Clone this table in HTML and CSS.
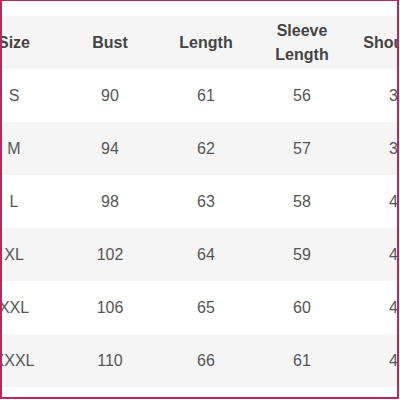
FILE: index.html
```html
<!DOCTYPE html>
<html>
<head>
<meta charset="utf-8">
<link rel="stylesheet" href="styles.css">
</head>
<body>
<div class="frame">
  <table class="sizes">
    <thead>
      <tr><th>Size</th><th>Bust</th><th>Length</th><th>Sleeve<br>Length</th><th>Shoulder</th></tr>
    </thead>
    <tbody>
      <tr><td>S</td><td>90</td><td>61</td><td>56</td><td>38</td></tr>
      <tr class="alt"><td>M</td><td>94</td><td>62</td><td>57</td><td>39</td></tr>
      <tr><td>L</td><td>98</td><td>63</td><td>58</td><td>40</td></tr>
      <tr class="alt"><td>XL</td><td>102</td><td>64</td><td>59</td><td>41</td></tr>
      <tr><td>XXL</td><td>106</td><td>65</td><td>60</td><td>42</td></tr>
      <tr class="alt"><td>XXXL</td><td>110</td><td>66</td><td>61</td><td>43</td></tr>
    </tbody>
  </table>
</div>
</body>
</html>
```
FILE: styles.css
```css
html, body {
  margin: 0;
  padding: 0;
  background: #ffffff;
}
.frame {
  box-sizing: border-box;
  width: 399px;
  height: 400px;
  margin-top: -1px;
  border: 2px solid #b8285a;
  overflow: hidden;
  padding-top: 15px;
  background: #ffffff;
}
.sizes {
  border-collapse: collapse;
  table-layout: fixed;
  width: 480px;
  margin-left: -36px;
  font-family: "Liberation Sans", Arial, sans-serif;
  font-size: 16px;
}
.sizes th, .sizes td {
  width: 96px;
  height: 53px;
  padding: 0;
  text-align: center;
  vertical-align: middle;
  box-sizing: border-box;
}
.sizes th {
  background: #f5f5f5;
  color: #444444;
  font-weight: bold;
  line-height: 24px;
}
.sizes td {
  color: #555555;
  font-weight: normal;
}
.sizes tr.alt td {
  background: #f5f5f5;
}
```
